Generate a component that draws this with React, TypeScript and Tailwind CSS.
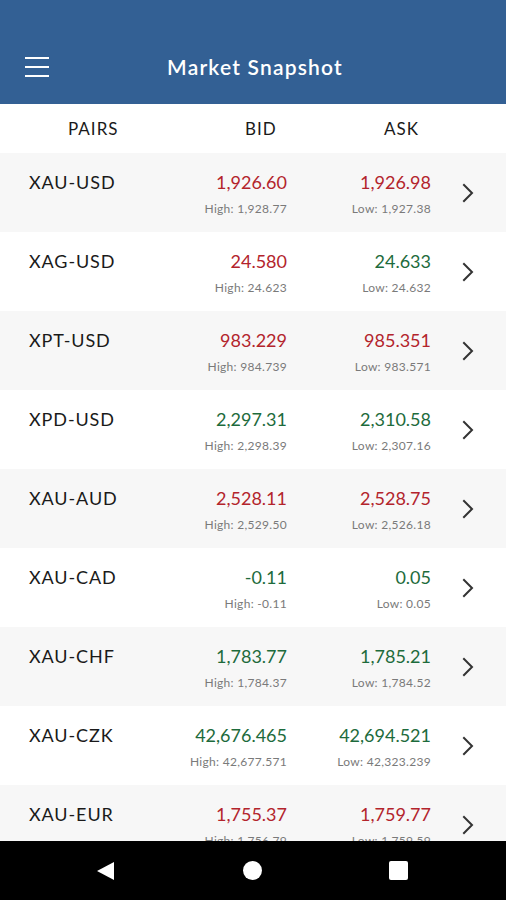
import React from "react";

type Row = { pair: string; bid: string; ask: string; high: string; low: string; bidUp: boolean; askUp: boolean };

const rows: Row[] = [
  { pair: "XAU-USD", bid: "1,926.60", ask: "1,926.98", high: "1,928.77", low: "1,927.38", bidUp: false, askUp: false },
  { pair: "XAG-USD", bid: "24.580", ask: "24.633", high: "24.623", low: "24.632", bidUp: false, askUp: true },
  { pair: "XPT-USD", bid: "983.229", ask: "985.351", high: "984.739", low: "983.571", bidUp: false, askUp: false },
  { pair: "XPD-USD", bid: "2,297.31", ask: "2,310.58", high: "2,298.39", low: "2,307.16", bidUp: true, askUp: true },
  { pair: "XAU-AUD", bid: "2,528.11", ask: "2,528.75", high: "2,529.50", low: "2,526.18", bidUp: false, askUp: false },
  { pair: "XAU-CAD", bid: "-0.11", ask: "0.05", high: "-0.11", low: "0.05", bidUp: true, askUp: true },
  { pair: "XAU-CHF", bid: "1,783.77", ask: "1,785.21", high: "1,784.37", low: "1,784.52", bidUp: true, askUp: true },
  { pair: "XAU-CZK", bid: "42,676.465", ask: "42,694.521", high: "42,677.571", low: "42,323.239", bidUp: true, askUp: true },
  { pair: "XAU-EUR", bid: "1,755.37", ask: "1,759.77", high: "1,756.79", low: "1,759.59", bidUp: false, askUp: false },
];

const font = { fontFamily: "Lato, 'Noto Sans', sans-serif" };

function Chevron() {
  return (
    <svg width="14" height="20" viewBox="0 0 14 20" fill="none">
      <path d="M3 2 L11 10 L3 18" stroke="#333" strokeWidth="2" strokeLinecap="square" />
    </svg>
  );
}

export default function App() {
  return (
    <div className="w-[506px] h-[900px] flex flex-col overflow-hidden bg-white" style={font}>
      <header className="h-[104px] shrink-0 bg-[#336094] relative flex items-end pb-[24px]">
        <div className="absolute left-[25px] top-[57px] flex flex-col gap-[7px]">
          <div className="w-[24px] h-[2px] bg-white" />
          <div className="w-[24px] h-[2px] bg-white" />
          <div className="w-[24px] h-[2px] bg-white" />
        </div>
        <div className="w-full text-center text-white text-[21px] font-semibold leading-[26px] tracking-[1.2px] pl-[4px]">Market Snapshot</div>
      </header>
      <div className="h-[49px] shrink-0 flex items-center text-[17px] text-[#1a1a1a] tracking-[1px]">
        <div className="w-[190px] pl-[68px]">PAIRS</div>
        <div className="w-[90px] pl-[55px]">BID</div>
        <div className="pl-[104px]">ASK</div>
      </div>
      <div className="flex-1 overflow-hidden">
        {rows.map((r, i) => (
          <div key={r.pair} className={`h-[79px] flex items-start whitespace-nowrap ${i % 2 === 0 ? "bg-[#f7f7f7]" : "bg-white"}`}>
            <div className="w-[190px] shrink-0 pl-[29px] pt-[17px] text-[18px] leading-[24px] tracking-[0.9px] text-[#1a1a1a]">{r.pair}</div>
            <div className="w-[97px] shrink-0 pt-[17px] flex flex-col items-end">
              <div className={`text-[18px] leading-[24px] ${r.bidUp ? "text-[#1d6b3c]" : "text-[#b3242c]"}`}>{r.bid}</div>
              <div className="mt-[7px] text-[12px] leading-[16px] tracking-[0.3px] text-[#7a7a7a]">High: {r.high}</div>
            </div>
            <div className="w-[144px] shrink-0 pt-[17px] flex flex-col items-end">
              <div className={`text-[18px] leading-[24px] ${r.askUp ? "text-[#1d6b3c]" : "text-[#b3242c]"}`}>{r.ask}</div>
              <div className="mt-[7px] text-[12px] leading-[16px] tracking-[0.3px] text-[#7a7a7a]">Low: {r.low}</div>
            </div>
            <div className="ml-[30px] h-full flex items-center">
              <Chevron />
            </div>
          </div>
        ))}
      </div>
      <nav className="h-[59px] shrink-0 bg-black flex items-center">
        <div className="w-[106px] flex justify-end">
          <svg width="20" height="20" viewBox="0 0 20 20" className="-mr-[10px]">
            <path d="M18 1 L18 19 L1 10 Z" fill="white" />
          </svg>
        </div>
        <div className="w-[147px] flex justify-end">
          <div className="w-[19px] h-[19px] rounded-full bg-white -mr-[9px]" />
        </div>
        <div className="w-[146px] flex justify-end">
          <div className="w-[19px] h-[19px] rounded-[2px] bg-white -mr-[9px]" />
        </div>
      </nav>
    </div>
  );
}
